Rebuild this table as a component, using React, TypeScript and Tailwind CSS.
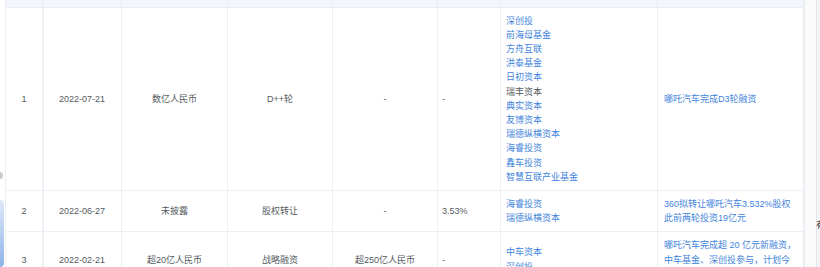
import type { ReactNode } from "react";

type Row = {
  no: string;
  date: string;
  amount: string;
  round: string;
  valuation: string;
  ratio: string;
  investors: { name: string; link: boolean }[];
  news: string[];
};

const rows: Row[] = [
  {
    no: "1",
    date: "2022-07-21",
    amount: "数亿人民币",
    round: "D++轮",
    valuation: "-",
    ratio: "-",
    investors: [
      { name: "深创投", link: true },
      { name: "前海母基金", link: true },
      { name: "方舟互联", link: true },
      { name: "洪泰基金", link: true },
      { name: "日初资本", link: true },
      { name: "瑞丰资本", link: false },
      { name: "典实资本", link: true },
      { name: "友博资本", link: true },
      { name: "瑞德纵横资本", link: true },
      { name: "海睿投资", link: true },
      { name: "鑫车投资", link: true },
      { name: "智慧互联产业基金", link: true },
    ],
    news: ["哪吒汽车完成D3轮融资"],
  },
  {
    no: "2",
    date: "2022-06-27",
    amount: "未披露",
    round: "股权转让",
    valuation: "-",
    ratio: "3.53%",
    investors: [
      { name: "海睿投资", link: true },
      { name: "瑞德纵横资本", link: true },
    ],
    news: ["360拟转让哪吒汽车3.532%股权", "此前两轮投资19亿元"],
  },
  {
    no: "3",
    date: "2022-02-21",
    amount: "超20亿人民币",
    round: "战略融资",
    valuation: "超250亿人民币",
    ratio: "-",
    investors: [
      { name: "中车资本", link: true },
      { name: "深创投", link: true },
    ],
    news: ["哪吒汽车完成超 20 亿元新融资，", "中车基金、深创投参与，计划今", "年启动科创板IPO"],
  },
];

function Cell({ children, className = "" }: { children?: ReactNode; className?: string }) {
  return (
    <td className={`border border-[#eceff4] px-[5px] py-[6px] align-middle ${className}`}>{children}</td>
  );
}

export default function App() {
  return (
    <div
      className="relative flex h-[267px] w-[820px] overflow-hidden bg-white text-[9px] leading-[14.2px] text-[#555a60]"
      style={{ fontFamily: '"Liberation Sans", "Noto Sans CJK SC", sans-serif' }}
    >
      <div className="w-[5px] shrink-0 bg-white" />

      <table className="w-[798px] shrink-0 table-fixed border-collapse self-start">
        <colgroup>
          <col className="w-[37px]" />
          <col className="w-[79px]" />
          <col className="w-[106px]" />
          <col className="w-[105px]" />
          <col className="w-[105px]" />
          <col className="w-[63px]" />
          <col className="w-[157px]" />
          <col className="w-[146px]" />
        </colgroup>
        <thead>
          <tr className="h-[7px] bg-[#f3f6fb]">
            {Array.from({ length: 8 }).map((_, i) => (
              <th key={i} className="border border-t-0 border-[#e8ecf3] p-0" />
            ))}
          </tr>
        </thead>
        <tbody>
          {rows.map((r) => (
            <tr key={r.no}>
              <Cell className="text-center">{r.no}</Cell>
              <Cell className="text-center shadow-[inset_4px_0_0_-3px_#eef1f5]">{r.date}</Cell>
              <Cell className="text-center">{r.amount}</Cell>
              <Cell className="text-center">{r.round}</Cell>
              <Cell className="text-center">{r.valuation}</Cell>
              <Cell className="pl-[4px] text-left">{r.ratio}</Cell>
              <Cell className="text-left">
                {r.investors.map((v) => (
                  <div key={v.name} className={v.link ? "text-[#3f84dc]" : "text-[#555a60]"}>
                    {v.name}
                  </div>
                ))}
              </Cell>
              <Cell className="pl-[6px] text-left text-[#3f84dc]">
                {r.news.map((n) => (
                  <div key={n} className="whitespace-nowrap">
                    {n}
                  </div>
                ))}
              </Cell>
            </tr>
          ))}
        </tbody>
      </table>

      <div className="w-[12px] shrink-0 border-l border-[#e8ecf3] bg-[#fbfbfc]" />
      <div className="flex-1 border-l border-[#e4e6ea] bg-[#f4f5f7] pt-[218px] text-[9px] text-[#333]">
        <span className="-ml-[1px] block overflow-hidden">有</span>
      </div>

      {/* floating overlays at the left edge */}
      <div className="absolute left-[-4px] top-[172px] h-[7px] w-[7px] rounded-full bg-[#c8cbd0]" />
      <div className="absolute left-0 top-[200px] h-[67px] w-[4px] rounded-r-sm bg-gradient-to-b from-[#dfe8f6] to-[#8db4ea]" />
    </div>
  );
}
